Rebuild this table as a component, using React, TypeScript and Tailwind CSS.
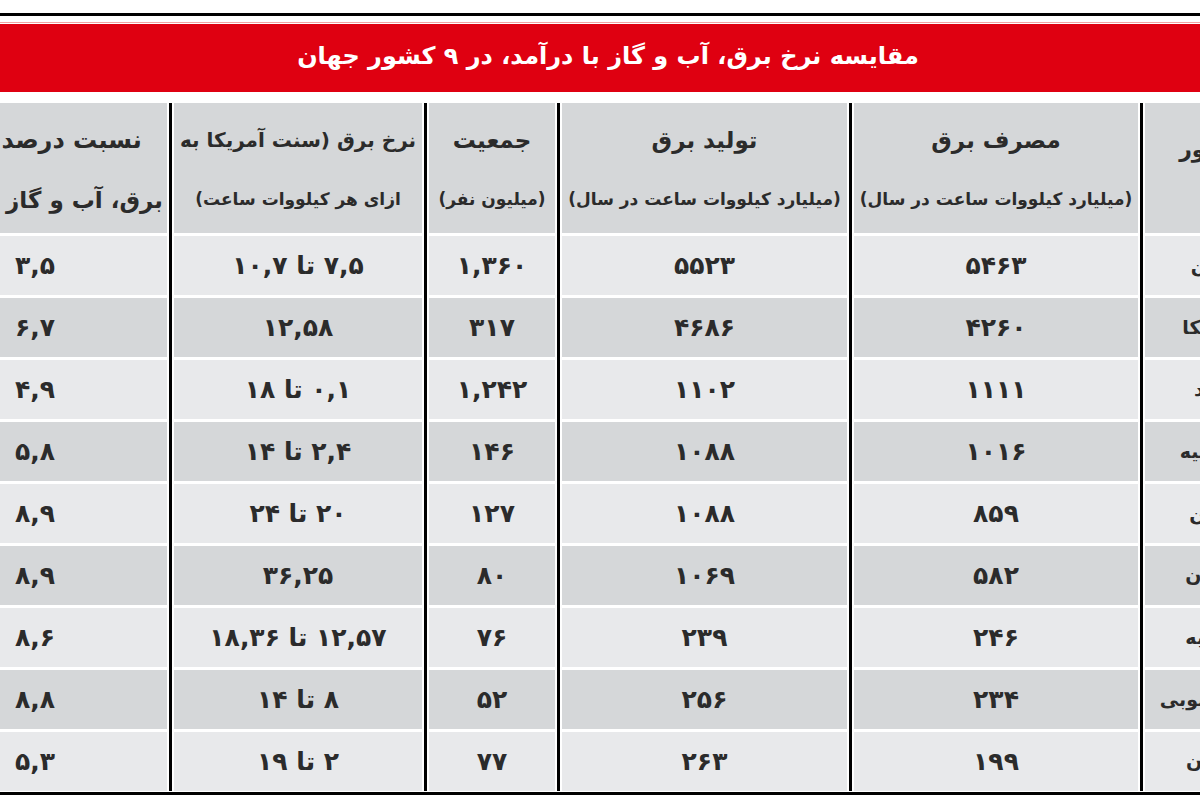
const rows = [
  ['چین', '۵۴۶۳', '۵۵۲۳', '۱,۳۶۰', '۷,۵ تا ۱۰,۷', '۳,۵'],
  ['آمریکا', '۴۲۶۰', '۴۶۸۶', '۳۱۷', '۱۲,۵۸', '۶,۷'],
  ['هند', '۱۱۱۱', '۱۱۰۲', '۱,۲۴۲', '۰,۱ تا ۱۸', '۴,۹'],
  ['روسیه', '۱۰۱۶', '۱۰۸۸', '۱۴۶', '۲,۴ تا ۱۴', '۵,۸'],
  ['ژاپن', '۸۵۹', '۱۰۸۸', '۱۲۷', '۲۰ تا ۲۴', '۸,۹'],
  ['آلمان', '۵۸۲', '۱۰۶۹', '۸۰', '۳۶,۲۵', '۸,۹'],
  ['ترکیه', '۲۴۶', '۲۳۹', '۷۶', '۱۲,۵۷ تا ۱۸,۳۶', '۸,۶'],
  ['کره جنوبی', '۲۳۴', '۲۵۶', '۵۲', '۸ تا ۱۴', '۸,۸'],
  ['ایران', '۱۹۹', '۲۶۳', '۷۷', '۲ تا ۱۹', '۵,۳'],
]

const headers = [
  ['مصرف برق', '(میلیارد کیلووات ساعت در سال)', 'text-[23px]'],
  ['تولید برق', '(میلیارد کیلووات ساعت در سال)', 'text-[23px]'],
  ['جمعیت', '(میلیون نفر)', 'text-[23px]'],
  ['نرخ برق (سنت آمریکا به', 'ازای هر کیلووات ساعت)', 'text-[20px]'],
]

function Divider({ col }: { col: string }) {
  return (
    <div className={`${col} row-start-1 row-span-10 flex justify-center bg-white`}>
      <div className="w-[3px] bg-black" />
    </div>
  )
}

export default function App() {
  return (
    <div className="w-[1200px] h-[800px] overflow-hidden bg-white font-['DejaVu_Sans',sans-serif] text-[#2b2b2b]">
      <div dir="rtl" className="ml-[-97px] w-[1372px] pt-[13px]">
        <div className="h-[3px] bg-black" />
        <div className="mt-[6px] h-px bg-[#f2a4a4]" />
        <div className="mt-px h-[68px] bg-[#df0011] flex items-center justify-center pl-[38px]">
          <h1 className="text-white font-bold text-[24px] leading-none pb-1">
            مقایسه نرخ برق، آب و گاز با درآمد، در ۹ کشور جهان
          </h1>
        </div>

        <div className="mt-[11px] grid grid-cols-[130px_7px_284px_7px_285px_7px_126px_7px_248px_7px_264px] grid-rows-[130px_repeat(9,59px)] gap-y-[3px]">
          <Divider col="col-start-2" />
          <Divider col="col-start-4" />
          <Divider col="col-start-6" />
          <Divider col="col-start-8" />
          <Divider col="col-start-10" />

          <div className="bg-[#d5d7d9] flex justify-center pt-[30px] text-[22px] font-bold">کشور</div>
          {headers.map(([a, b, size]) => (
            <div key={a} className="bg-[#d5d7d9] flex flex-col items-center pt-[7px] font-bold">
              <div className={`h-[60px] flex items-center whitespace-nowrap ${size}`}>{a}</div>
              <div className="h-[60px] flex items-center text-[17px] whitespace-nowrap">{b}</div>
            </div>
          ))}
          <div className="bg-[#d5d7d9] flex flex-col items-center pt-[7px] font-bold">
            <div className="h-[60px] flex items-center text-[24px] whitespace-nowrap">نسبت درصد هزینه</div>
            <div className="h-[60px] flex items-center text-[23px] whitespace-nowrap">برق، آب و گاز به درآمد</div>
          </div>

          {rows.map((r, i) =>
            r.map((c, j) => (
              <div
                key={`${i}-${j}`}
                className={`${i % 2 === 0 ? 'bg-[#e8e9eb]' : 'bg-[#d5d7d9]'} flex items-center justify-center font-bold whitespace-nowrap ${j === 0 ? 'text-[19px]' : 'text-[25px]'}`}
              >
                {c}
              </div>
            ))
          )}
        </div>
        <div className="mt-px h-[3px] bg-black" />
      </div>
    </div>
  )
}
